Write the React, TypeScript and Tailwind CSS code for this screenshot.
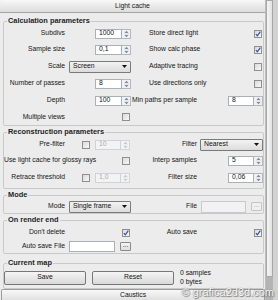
import React from "react";

function Check({ checked }: { checked?: boolean }) {
  return (
    <div className="w-[8px] h-[8px] shrink-0 border border-[#8e8f8f] bg-gradient-to-br from-[#dadada] to-[#f8f8f8] flex items-center justify-center">
      {checked && (
        <svg width="6" height="6" viewBox="0 0 6 6">
          <path d="M0.9 3.1 L2.4 4.8 L5.3 0.7" stroke="#3550a0" strokeWidth="1.2" fill="none" />
        </svg>
      )}
    </div>
  );
}

function Spinner({ value, disabled, w }: { value: string; disabled?: boolean; w: string }) {
  return (
    <div className={`flex h-[10px] shrink-0 ${w}`}>
      <div
        className={`flex-1 flex items-center pl-[3px] border ${
          disabled ? "border-[#cfd2d6] bg-[#f3f3f3] text-[#a9a9a9]" : "border-[#a9b0ba] bg-white text-[#111]"
        }`}
      >
        {value}
      </div>
      <div
        className={`w-[9px] border border-l-0 flex items-center justify-center ${
          disabled ? "border-[#d3d5d8] bg-[#f3f3f3]" : "border-[#b3b8c0] bg-[#f1f1f1]"
        }`}
      >
        <svg width="5" height="8" viewBox="0 0 5 8">
          <path d="M2.5 0.8 L4.5 3 L0.5 3 Z" fill={disabled ? "#c4c9d0" : "#7d8aa0"} />
          <path d="M0 4 H5" stroke={disabled ? "#dde0e4" : "#c9ced6"} strokeWidth="0.6" />
          <path d="M0.5 5 L4.5 5 L2.5 7.2 Z" fill={disabled ? "#c4c9d0" : "#7d8aa0"} />
        </svg>
      </div>
    </div>
  );
}

function Dropdown({ value, w }: { value: string; w: string }) {
  return (
    <div
      className={`h-[12px] shrink-0 ${w} border border-[#7a7a7a] rounded-[1px] bg-gradient-to-b from-[#f3f3f3] to-[#dcdcdc] flex items-center justify-between pl-[3px] pr-[3px] text-[#111]`}
    >
      <span>{value}</span>
      <svg width="5" height="3" viewBox="0 0 5 3">
        <path d="M0 0 H5 L2.5 3 Z" fill="#111" />
      </svg>
    </div>
  );
}

function Dots({ disabled }: { disabled?: boolean }) {
  return (
    <div
      className={`w-[11px] h-[9px] shrink-0 rounded-[1px] border flex items-center justify-center leading-none ${
        disabled ? "border-[#c4c4c4] bg-[#f0f0f0] text-[#a5a5a5]" : "border-[#8a8a8a] bg-gradient-to-b from-[#f4f4f4] to-[#dedede] text-[#222]"
      }`}
    >
      <span className="-mt-[2px]">...</span>
    </div>
  );
}

function LabelL({ children }: { children: React.ReactNode }) {
  return <div className="w-[61px] shrink-0 flex justify-end whitespace-nowrap">{children}</div>;
}
function LabelR({ children }: { children: React.ReactNode }) {
  return <div className="w-[60px] shrink-0 flex justify-end whitespace-nowrap">{children}</div>;
}

function Row({ h, left, right }: { h: string; left?: React.ReactNode; right?: React.ReactNode }) {
  return (
    <div className={`flex items-center ${h}`}>
      <div className="w-[127px] shrink-0 flex items-center">{left}</div>
      <div className="ml-[6px] w-[126px] shrink-0 flex items-center">{right}</div>
    </div>
  );
}

function Group({ title, children, mt }: { title: string; children: React.ReactNode; mt: string }) {
  return (
    <fieldset className={`${mt} ml-[3px] w-[261px] border border-[#c9c9c9] rounded-[2px]`}>
      <legend className="ml-[3px] px-[1px] h-[10px] leading-[10px] text-[7.4px] font-bold text-[#1e1e1e]">{title}</legend>
      {children}
    </fieldset>
  );
}

export default function App() {
  return (
    <div className="relative w-[278px] h-[300px] overflow-hidden flex bg-[#ececec] text-[6.8px] leading-none text-[#151515] font-['Liberation_Sans',Arial,sans-serif]">
      <div className="w-[265px] h-full flex flex-col">
        <div className="h-[13px] shrink-0 border-b border-[#a5a5a5] bg-gradient-to-b from-[#f8f8f8] to-[#dcdcdc] flex items-center justify-center rounded-t-[2px]">
          Light cache
        </div>

        <Group title="Calculation parameters" mt="mt-[3px]">
          <Row
            h="h-[15px]"
            left={<><LabelL>Subdivs</LabelL><div className="ml-auto"><Spinner value="1000" w="w-[36px]" /></div></>}
            right={<><span className="pl-[12px]">Store direct light</span><div className="ml-auto mr-[1px]"><Check checked /></div></>}
          />
          <Row
            h="h-[17px]"
            left={<><LabelL>Sample size</LabelL><div className="ml-auto"><Spinner value="0,1" w="w-[36px]" /></div></>}
            right={<><span className="pl-[12px]">Show calc phase</span><div className="ml-auto mr-[1px]"><Check checked /></div></>}
          />
          <Row
            h="h-[17px]"
            left={<><LabelL>Scale</LabelL><div className="ml-auto"><Dropdown value="Screen" w="w-[62px]" /></div></>}
            right={<><span className="pl-[12px]">Adaptive tracing</span><div className="ml-auto mr-[1px]"><Check /></div></>}
          />
          <Row
            h="h-[17px]"
            left={<><LabelL>Number of passes</LabelL><div className="ml-auto"><Spinner value="8" w="w-[36px]" /></div></>}
            right={<><span className="pl-[12px]">Use directions only</span><div className="ml-auto mr-[1px]"><Check /></div></>}
          />
          <Row
            h="h-[17px]"
            left={<><LabelL>Depth</LabelL><div className="ml-auto"><Spinner value="100" w="w-[36px]" /></div></>}
            right={<><LabelR>Min paths per sample</LabelR><div className="ml-auto"><Spinner value="8" w="w-[35px]" /></div></>}
          />
          <Row
            h="h-[16px]"
            left={<><LabelL>Multiple views</LabelL><div className="ml-auto mr-[1px]"><Check /></div></>}
          />
        </Group>

        <Group title="Reconstruction parameters" mt="mt-[1px]">
          <Row
            h="h-[15px]"
            left={<><LabelL>Pre-filter</LabelL><div className="ml-[17px]"><Check /></div><div className="ml-[5px]"><Spinner value="10" disabled w="w-[35px]" /></div></>}
            right={<><LabelR>Filter</LabelR><div className="ml-auto"><Dropdown value="Nearest" w="w-[63px]" /></div></>}
          />
          <Row
            h="h-[17px]"
            left={<><span className="whitespace-nowrap">Use light cache for glossy rays</span><div className="ml-auto mr-[1px]"><Check /></div></>}
            right={<><LabelR>Interp samples</LabelR><div className="ml-auto"><Spinner value="5" w="w-[35px]" /></div></>}
          />
          <Row
            h="h-[17px]"
            left={<><LabelL>Retrace threshold</LabelL><div className="ml-[17px]"><Check /></div><div className="ml-[5px]"><Spinner value="1,0" disabled w="w-[35px]" /></div></>}
            right={<><LabelR>Filter size</LabelR><div className="ml-auto"><Spinner value="0,06" w="w-[35px]" /></div></>}
          />
          <div className="h-[2px]" />
        </Group>

        <Group title="Mode" mt="mt-[1px]">
          <Row
            h="h-[13px]"
            left={<><LabelL>Mode</LabelL><div className="ml-auto"><Dropdown value="Single frame" w="w-[62px]" /></div></>}
            right={<><LabelR>File</LabelR><div className="ml-[4px] w-[45px] h-[12px] border border-[#c6c9cd] bg-[#f2f2f2]" /><div className="ml-[5px]"><Dots disabled /></div></>}
          />
        </Group>

        <Group title="On render end" mt="mt-[1px]">
          <Row
            h="h-[15px]"
            left={<><LabelL>Don&apos;t delete</LabelL><div className="ml-auto mr-[1px]"><Check checked /></div></>}
            right={<><LabelR>Auto save</LabelR><div className="ml-auto mr-[1px]"><Check checked /></div></>}
          />
          <Row
            h="h-[13px]"
            left={<><LabelL>Auto save File</LabelL><div className="ml-[4px] w-[46px] h-[11px] border border-[#a9b0ba] bg-white" /><div className="ml-[5px]"><Dots /></div></>}
          />
        </Group>

        <Group title="Current map" mt="mt-[4px]">
          <div className="flex items-center pt-[2px] pb-[2px]">
            <div className="w-[82px] h-[14px] rounded-[2px] border border-[#777] bg-gradient-to-b from-[#f5f5f5] to-[#d9d9d9] flex items-center justify-center">Save</div>
            <div className="ml-[6px] w-[82px] h-[14px] rounded-[2px] border border-[#777] bg-gradient-to-b from-[#f5f5f5] to-[#d9d9d9] flex items-center justify-center">Reset</div>
            <div className="ml-[6px] flex flex-col gap-[2px]">
              <span>0 samples</span>
              <span>0 bytes</span>
            </div>
          </div>
        </Group>

        <div className="mt-auto ml-[1px] h-[11px] shrink-0 border border-b-0 border-[#9c9c9c] rounded-t-[2px] bg-gradient-to-b from-[#f8f8f8] to-[#e0e0e0] flex items-center justify-center">
          Caustics
        </div>
      </div>

      <div className="w-[13px] h-full flex">
        <div className="w-[1px] bg-[#bdbdbd]" />
        <div className="w-[7px] flex flex-col">
          <div className="h-[277px] border border-[#a8a8a8] bg-gradient-to-r from-[#f5f5f5] to-[#e3e3e3]" />
          <div className="flex-1 bg-[#b4b4b4]" />
        </div>
        <div className="flex-1 bg-[#d2d2d2]" />
      </div>

      <div className="absolute right-[4px] bottom-[2px] text-[11px] text-white whitespace-nowrap [text-shadow:0_0_1px_#555,1px_1px_1px_#777]">
        © grafica2d3d.com
      </div>
    </div>
  );
}
